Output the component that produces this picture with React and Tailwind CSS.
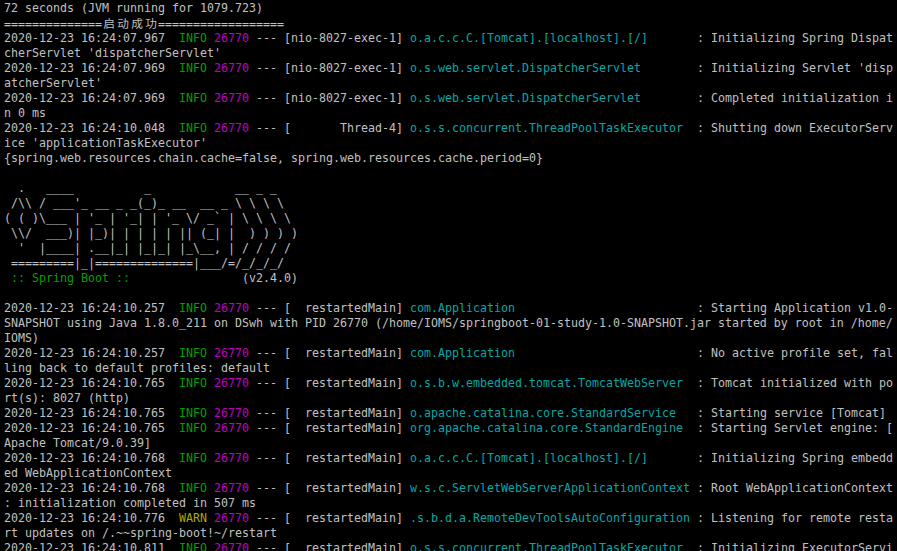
import React from "react";

const G = "text-[#c0c0c0]";
const GREEN = "text-[#00a000]";
const MAG = "text-[#c000c0]";
const CYAN = "text-[#00a8a8]";
const YEL = "text-[#b0a800]";

function Row({ children }) {
  return <div className="h-[15px] leading-[15px] whitespace-pre">{children}</div>;
}

function Log({ date, level, thread, logger, msg }) {
  const first = msg.slice(0, 26);
  let rest = msg.slice(26);
  const more = [];
  while (rest.length > 0) {
    more.push(rest.slice(0, 127));
    rest = rest.slice(127);
  }
  return (
    <>
      <Row>
        <span className={G}>{date + "  "}</span>
        <span className={level === "WARN" ? YEL : GREEN}>{level}</span>
        <span className={G}> </span>
        <span className={MAG}>26770</span>
        <span className={G}>{" --- [" + thread.padStart(15, " ") + "] "}</span>
        <span className={CYAN}>{logger.padEnd(40, " ")}</span>
        <span className={G}>{" : " + first}</span>
      </Row>
      {more.map((m, i) => (
        <Row key={i}>
          <span className={G}>{m}</span>
        </Row>
      ))}
    </>
  );
}

function Plain({ t }) {
  return (
    <Row>
      <span className={G}>{t}</span>
    </Row>
  );
}

const cjk = ["启", "动", "成", "功"];

export default function App() {
  const N = "nio-8027-exec-1";
  const R = "restartedMain";
  return (
    <div
      className="w-[897px] h-[551px] overflow-hidden bg-black pl-[4px] pt-[1px] text-[11.63px]"
      style={{ fontFamily: '"DejaVu Sans Mono", "Liberation Mono", monospace' }}
    >
      <Plain t="72 seconds (JVM running for 1079.723)" />
      <Row>
        <span className={G}>==============</span>
        {cjk.map((c) => (
          <span
            key={c}
            className={`${G} inline-block w-[14px] text-center`}
            style={{ fontFamily: '"Noto Sans CJK SC", sans-serif' }}
          >
            {c}
          </span>
        ))}
        <span className={G}>==================</span>
      </Row>
      <Log date="2020-12-23 16:24:07.967" level="INFO" thread={N} logger="o.a.c.c.C.[Tomcat].[localhost].[/]" msg="Initializing Spring DispatcherServlet 'dispatcherServlet'" />
      <Log date="2020-12-23 16:24:07.969" level="INFO" thread={N} logger="o.s.web.servlet.DispatcherServlet" msg="Initializing Servlet 'dispatcherServlet'" />
      <Log date="2020-12-23 16:24:07.969" level="INFO" thread={N} logger="o.s.web.servlet.DispatcherServlet" msg="Completed initialization in 0 ms" />
      <Log date="2020-12-23 16:24:10.048" level="INFO" thread="Thread-4" logger="o.s.s.concurrent.ThreadPoolTaskExecutor" msg="Shutting down ExecutorService 'applicationTaskExecutor'" />
      <Plain t="{spring.web.resources.chain.cache=false, spring.web.resources.cache.period=0}" />
      <Plain t="" />
      <Plain t="  .   ____          _            __ _ _" />
      <Plain t={" /\\\\ / ___'_ __ _ _(_)_ __  __ _ \\ \\ \\ \\"} />
      <Plain t={"( ( )\\___ | '_ | '_| | '_ \\/ _` | \\ \\ \\ \\"} />
      <Plain t={" \\\\/  ___)| |_)| | | | | || (_| |  ) ) ) )"} />
      <Plain t={"  '  |____| .__|_| |_|_| |_\\__, | / / / /"} />
      <Plain t={" =========|_|==============|___/=/_/_/_/"} />
      <Row>
        <span className={GREEN}> :: Spring Boot :: </span>
        <span className={G}>{"               (v2.4.0)"}</span>
      </Row>
      <Plain t="" />
      <Log date="2020-12-23 16:24:10.257" level="INFO" thread={R} logger="com.Application" msg="Starting Application v1.0-SNAPSHOT using Java 1.8.0_211 on DSwh with PID 26770 (/home/IOMS/springboot-01-study-1.0-SNAPSHOT.jar started by root in /home/IOMS)" />
      <Log date="2020-12-23 16:24:10.257" level="INFO" thread={R} logger="com.Application" msg="No active profile set, falling back to default profiles: default" />
      <Log date="2020-12-23 16:24:10.765" level="INFO" thread={R} logger="o.s.b.w.embedded.tomcat.TomcatWebServer" msg="Tomcat initialized with port(s): 8027 (http)" />
      <Log date="2020-12-23 16:24:10.765" level="INFO" thread={R} logger="o.apache.catalina.core.StandardService" msg="Starting service [Tomcat]" />
      <Log date="2020-12-23 16:24:10.765" level="INFO" thread={R} logger="org.apache.catalina.core.StandardEngine" msg="Starting Servlet engine: [Apache Tomcat/9.0.39]" />
      <Log date="2020-12-23 16:24:10.768" level="INFO" thread={R} logger="o.a.c.c.C.[Tomcat].[localhost].[/]" msg="Initializing Spring embedded WebApplicationContext" />
      <Log date="2020-12-23 16:24:10.768" level="INFO" thread={R} logger="w.s.c.ServletWebServerApplicationContext" msg="Root WebApplicationContext: initialization completed in 507 ms" />
      <Log date="2020-12-23 16:24:10.776" level="WARN" thread={R} logger=".s.b.d.a.RemoteDevToolsAutoConfiguration" msg="Listening for remote restart updates on /.~~spring-boot!~/restart" />
      <Log date="2020-12-23 16:24:10.811" level="INFO" thread={R} logger="o.s.s.concurrent.ThreadPoolTaskExecutor" msg="Initializing ExecutorService 'applicationTaskExecutor'" />
    </div>
  );
}
